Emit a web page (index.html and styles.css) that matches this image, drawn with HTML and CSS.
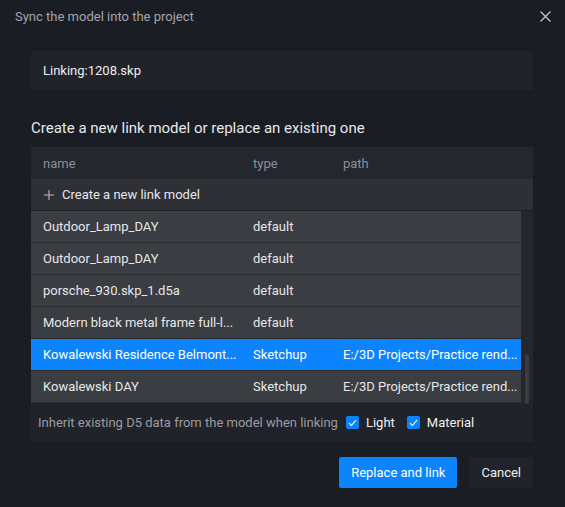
FILE: index.html
```html
<!DOCTYPE html>
<html lang="en">
<head>
    <meta charset="UTF-8">
    <meta name="viewport" content="width=device-width, initial-scale=1.0">
    <title>Sync Model</title>
    <link rel="stylesheet" href="styles.css">
</head>
<body>

    <!-- Dialog header -->
    <header class="dialog-header">
        <span class="dialog-title">Sync the model into the project</span>
        <button class="close-btn" aria-label="Close">
            <svg width="11" height="11" viewBox="0 0 11 11">
                <path d="M0.5 0.5 L10.5 10.5 M10.5 0.5 L0.5 10.5" stroke="#c8cacf" stroke-width="1.2" fill="none"/>
            </svg>
        </button>
    </header>

    <div class="dialog-body">
        <div class="link-box">Linking:1208.skp</div>

        <h2 class="section-title">Create a new link model or replace an existing one</h2>

        <!-- Model table -->
        <div class="model-table">
            <div class="table-row table-head">
                <span>name</span>
                <span>type</span>
                <span>path</span>
            </div>
            <div class="create-row">
                <svg class="plus" width="10" height="10" viewBox="0 0 10 10">
                    <path d="M5 0 V10 M0 5 H10" stroke="#b9bbc0" stroke-width="1.1" fill="none"/>
                </svg>
                Create a new link model
            </div>

            <div class="table-scroll">
                <div class="rows">
                    <div class="table-row model-row">
                        <span>Outdoor_Lamp_DAY</span><span>default</span><span></span>
                    </div>
                    <div class="table-row model-row">
                        <span>Outdoor_Lamp_DAY</span><span>default</span><span></span>
                    </div>
                    <div class="table-row model-row">
                        <span>porsche_930.skp_1.d5a</span><span>default</span><span></span>
                    </div>
                    <div class="table-row model-row">
                        <span>Modern black metal frame full-l...</span><span>default</span><span></span>
                    </div>
                    <div class="table-row model-row selected">
                        <span>Kowalewski Residence Belmont...</span><span>Sketchup</span><span>E:/3D Projects/Practice rend...</span>
                    </div>
                    <div class="table-row model-row">
                        <span>Kowalewski DAY</span><span>Sketchup</span><span>E:/3D Projects/Practice rend...</span>
                    </div>
                </div>
                <div class="scrollbar">
                    <div class="thumb"></div>
                </div>
            </div>

            <div class="inherit-row">
                <span class="inherit-label">Inherit existing D5 data from the model when linking</span>
                <label class="check">
                    <span class="box">
                        <svg width="9" height="8" viewBox="0 0 9 8"><path d="M1 4.2 L3.4 6.5 L8 1.2" stroke="#fff" stroke-width="1.1" fill="none"/></svg>
                    </span>
                    Light
                </label>
                <label class="check">
                    <span class="box">
                        <svg width="9" height="8" viewBox="0 0 9 8"><path d="M1 4.2 L3.4 6.5 L8 1.2" stroke="#fff" stroke-width="1.1" fill="none"/></svg>
                    </span>
                    Material
                </label>
            </div>
        </div>

        <div class="actions">
            <button class="primary-btn">Replace and link</button>
            <button class="cancel-btn">Cancel</button>
        </div>
    </div>

</body>
</html>
```

FILE: styles.css
```css
body {
    font-family: 'Roboto', 'Liberation Sans', sans-serif;
    background: #1b1d24;
    color: #e4e5e8;
    margin: 0;
    padding: 0;
    font-size: 13px;
}

/* Header */
.dialog-header {
    height: 32px;
    display: flex;
    align-items: center;
    justify-content: space-between;
    padding: 0 14px 0 15px;
}

.dialog-title {
    color: #a3a5aa;
    font-size: 13px;
}

.close-btn {
    background: none;
    border: none;
    padding: 0;
    width: 11px;
    height: 11px;
    display: flex;
    cursor: pointer;
}

/* Body */
.dialog-body {
    padding: 0 32px 0 31px;
}

.link-box {
    margin-top: 19px;
    height: 39px;
    background: #21232a;
    display: flex;
    align-items: center;
    padding-left: 12px;
    color: #eeeff1;
}

.section-title {
    font-size: 15px;
    font-weight: normal;
    color: #e6e7ea;
    margin: 0;
    height: 57px;
    line-height: 20px;
    padding-top: 28px;
    box-sizing: border-box;
}

/* Table */
.model-table {
    background: #21232a;
}

.table-row {
    display: grid;
    grid-template-columns: 210px 90px 1fr;
    align-items: center;
    padding-left: 12px;
    white-space: nowrap;
}

.table-row span {
    overflow: hidden;
}

.table-head {
    height: 32px;
    background: #25272e;
    color: #8c8f95;
}

.create-row {
    height: 31px;
    background: #2e3036;
    border-bottom: 1px solid #1d1f25;
    display: flex;
    align-items: center;
    padding-left: 13px;
    gap: 8px;
    color: #e6e7ea;
}

.table-scroll {
    display: flex;
}

.rows {
    width: 490px;
}

.model-row {
    height: 31px;
    background: #3a3d41;
    border-bottom: 1px solid #2a2c31;
    color: #e6e7ea;
}

.model-row.selected {
    background: #0b84fe;
    color: #ffffff;
}

.scrollbar {
    flex-grow: 1;
    background: #25272c;
    position: relative;
}

.thumb {
    position: absolute;
    left: 4px;
    top: 143px;
    width: 4px;
    height: 50px;
    border-radius: 2px;
    background: #3a3c42;
}

/* Inherit options */
.inherit-row {
    height: 39px;
    display: flex;
    align-items: center;
    padding-left: 7px;
}

.inherit-label {
    color: #9a9ca1;
    margin-right: 8px;
}

.check {
    display: flex;
    align-items: center;
    gap: 7px;
    margin-right: 12px;
    color: #eeeff1;
}

.box {
    width: 13px;
    height: 13px;
    border-radius: 2px;
    background: #0b84fe;
    display: flex;
    align-items: center;
    justify-content: center;
}

/* Buttons */
.actions {
    display: flex;
    justify-content: flex-end;
    gap: 12px;
    margin-top: 15px;
}

.primary-btn {
    background: #0b84fe;
    color: #ffffff;
    border: none;
    border-radius: 2px;
    height: 31px;
    padding: 0 12px;
    font-family: inherit;
    font-size: 13px;
    cursor: pointer;
}

.cancel-btn {
    background: #21232a;
    color: #eeeff1;
    border: none;
    border-radius: 2px;
    height: 31px;
    padding: 0 12px;
    font-family: inherit;
    font-size: 13px;
    cursor: pointer;
}
```
